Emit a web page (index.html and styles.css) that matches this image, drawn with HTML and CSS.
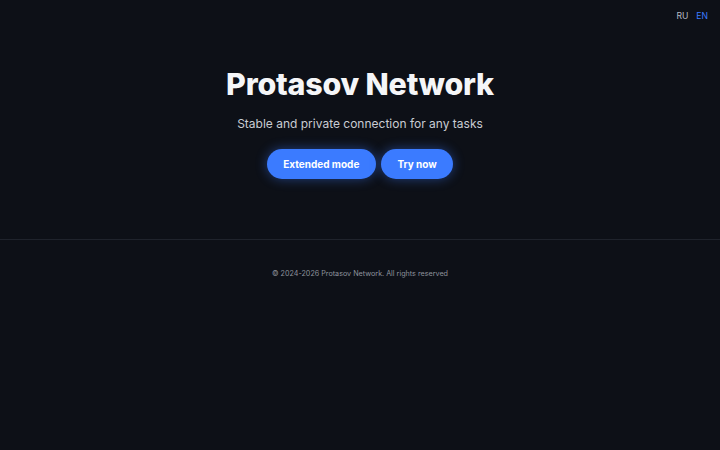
FILE: index.html
```html
<!DOCTYPE html>
<html lang="en">
<head>
<meta charset="utf-8">
<title>Protasov Network</title>
<link rel="stylesheet" href="styles.css">
</head>
<body>
<header class="topbar">
  <nav class="lang">
    <a class="lang-item" href="#">RU</a>
    <a class="lang-item active" href="#">EN</a>
  </nav>
</header>
<main class="hero">
  <h1 class="title">Protasov Network</h1>
  <p class="subtitle">Stable and private connection for any tasks</p>
  <div class="actions">
    <a class="btn" href="#">Extended mode</a>
    <a class="btn" href="#">Try now</a>
  </div>
</main>
<footer class="footer">
  <p class="copy">© 2024-2026 Protasov Network. All rights reserved</p>
</footer>
</body>
</html>
```
FILE: styles.css
```css
* { box-sizing: border-box; }
html, body { margin: 0; padding: 0; }
body {
  background: #0d1017;
  color: #f5f6f8;
  font-family: Inter, "Noto Sans", sans-serif;
  width: 720px;
  height: 450px;
  overflow: hidden;
}
.topbar {
  display: flex;
  justify-content: flex-end;
  padding: 11px 12px 0 0;
  height: 52px;
}
.lang { display: flex; gap: 8px; }
.lang-item {
  font-size: 8.6px;
  color: #b8bcc6;
  text-decoration: none;
  line-height: 11px;
}
.lang-item.active { color: #3b7bff; }
.hero {
  display: flex;
  flex-direction: column;
  align-items: center;
  padding-bottom: 60px;
  border-bottom: 1px solid #1f232c;
}
.title {
  margin: 12px 0 0;
  font-size: 30.4px;
  font-weight: 800;
  line-height: 40px;
  letter-spacing: -0.2px;
}
.subtitle {
  margin: 11px 0 0;
  font-size: 12px;
  line-height: 18px;
  color: #c9ccd3;
}
.actions {
  display: flex;
  gap: 5px;
  margin-top: 16px;
}
.btn {
  display: flex;
  align-items: center;
  height: 30px;
  padding: 0 16.5px;
  border-radius: 15px;
  background: #3b7bff;
  color: #fff;
  font-size: 10px;
  font-weight: 700;
  text-decoration: none;
  box-shadow: 0 0 12px rgba(59, 123, 255, 0.45);
}
.footer {
  display: flex;
  justify-content: center;
  padding-top: 29px;
}
.copy {
  margin: 0;
  font-size: 7.2px;
  color: #8e939d;
  line-height: 10px;
}
```
